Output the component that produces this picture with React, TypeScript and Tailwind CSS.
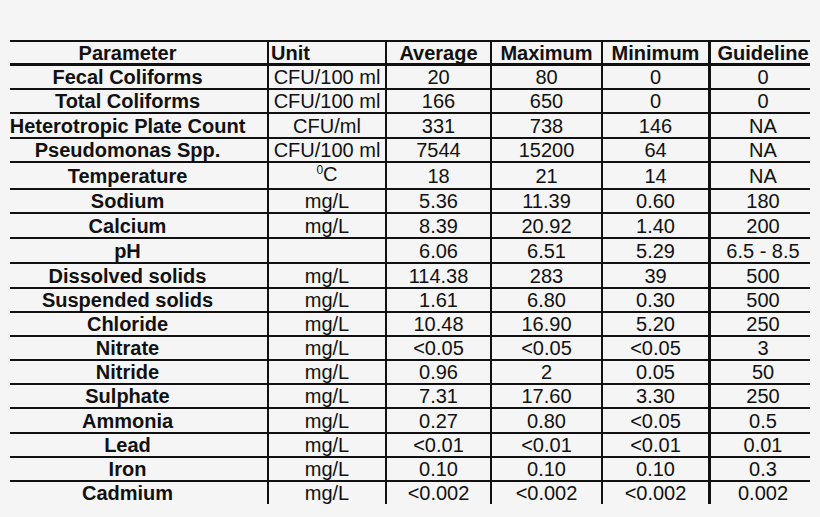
const rows = [
  { p: "Fecal Coliforms", u: "CFU/100 ml", a: "20", mx: "80", mn: "0", g: "0", h: "h-[24px]" },
  { p: "Total Coliforms", u: "CFU/100 ml", a: "166", mx: "650", mn: "0", g: "0", h: "h-[24px]" },
  { p: "Heterotropic Plate Count", u: "CFU/ml", a: "331", mx: "738", mn: "146", g: "NA", h: "h-[25px]" },
  { p: "Pseudomonas Spp.", u: "CFU/100 ml", a: "7544", mx: "15200", mn: "64", g: "NA", h: "h-[24px]" },
  { p: "Temperature", u: "degC", a: "18", mx: "21", mn: "14", g: "NA", h: "h-[27px]" },
  { p: "Sodium", u: "mg/L", a: "5.36", mx: "11.39", mn: "0.60", g: "180", h: "h-[24px]" },
  { p: "Calcium", u: "mg/L", a: "8.39", mx: "20.92", mn: "1.40", g: "200", h: "h-[25px]" },
  { p: "pH", u: "", a: "6.06", mx: "6.51", mn: "5.29", g: "6.5 - 8.5", h: "h-[25px]" },
  { p: "Dissolved solids", u: "mg/L", a: "114.38", mx: "283", mn: "39", g: "500", h: "h-[25px]" },
  { p: "Suspended solids", u: "mg/L", a: "1.61", mx: "6.80", mn: "0.30", g: "500", h: "h-[24px]" },
  { p: "Chloride", u: "mg/L", a: "10.48", mx: "16.90", mn: "5.20", g: "250", h: "h-[24px]" },
  { p: "Nitrate", u: "mg/L", a: "<0.05", mx: "<0.05", mn: "<0.05", g: "3", h: "h-[24px]" },
  { p: "Nitride", u: "mg/L", a: "0.96", mx: "2", mn: "0.05", g: "50", h: "h-[24px]" },
  { p: "Sulphate", u: "mg/L", a: "7.31", mx: "17.60", mn: "3.30", g: "250", h: "h-[24px]" },
  { p: "Ammonia", u: "mg/L", a: "0.27", mx: "0.80", mn: "<0.05", g: "0.5", h: "h-[25px]" },
  { p: "Lead", u: "mg/L", a: "<0.01", mx: "<0.01", mn: "<0.01", g: "0.01", h: "h-[24px]" },
  { p: "Iron", u: "mg/L", a: "0.10", mx: "0.10", mn: "0.10", g: "0.3", h: "h-[24px]" },
  { p: "Cadmium", u: "mg/L", a: "<0.002", mx: "<0.002", mn: "<0.002", g: "0.002", h: "h-[22px]" },
]

const cols = "grid grid-cols-[257px_118px_105px_111px_107px_102px]"
const cell = "flex items-center justify-center leading-[22px] whitespace-nowrap"

export default function App() {
  return (
    <div
      className="w-[820px] h-[517px] bg-[#f5f5f5] pt-[40px] pl-[10px] text-[#111] text-[20px] overflow-hidden"
      style={{ fontFamily: '"Liberation Sans", Arial, sans-serif' }}
    >
      <div className="w-[800px] flex flex-col">
        {/* header */}
        <div className={`${cols} h-[26px] border-t-2 border-b-[3px] border-[#111] font-bold`}>
          <div className={`${cell} pr-[22px]`}>Parameter</div>
          <div className="flex items-center leading-[22px] border-l-2 border-[#111] pl-[2px]">Unit</div>
          <div className={`${cell} border-l-2 border-[#111]`}>Average</div>
          <div className={`${cell} border-l-2 border-[#111]`}>Maximum</div>
          <div className={`${cell} border-l-2 border-[#111]`}>Minimum</div>
          <div className={`${cell} border-l-[3px] border-[#111] pl-[5px]`}>Guideline</div>
        </div>
        {rows.map((r, i) => (
          <div
            key={r.p}
            className={`${cols} ${r.h} ${i === rows.length - 1 ? "" : "border-b-2 border-[#111]"}`}
          >
            <div className={`${cell} pr-[22px] font-bold`}>{r.p}</div>
            <div className={`${cell} border-l-2 border-[#111]`}>
              {r.u === "degC" ? (
                <span>
                  <span className="text-[12px] relative -top-[7px]">0</span>C
                </span>
              ) : (
                r.u
              )}
            </div>
            <div className={`${cell} border-l-2 border-[#111]`}>{r.a}</div>
            <div className={`${cell} border-l-2 border-[#111]`}>{r.mx}</div>
            <div className={`${cell} border-l-2 border-[#111]`}>{r.mn}</div>
            <div className={`${cell} border-l-[3px] border-[#111] pl-[5px]`}>{r.g}</div>
          </div>
        ))}
      </div>
    </div>
  )
}
